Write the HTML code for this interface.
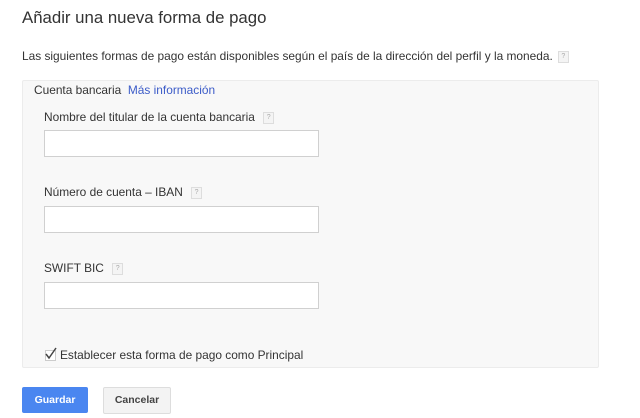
<!DOCTYPE html>
<html><head><meta charset="utf-8"><style>
body{margin:0;width:640px;height:418px;background:#fff;font-family:"Liberation Sans",Arial,sans-serif;color:#222;position:relative;overflow:hidden}
.a{position:absolute}
.h{left:22px;top:8px;font-size:16.8px;color:#333}
.t{font-size:11.9px;color:#333}
.q{display:inline-block;width:9px;height:10px;border:1px solid #ddd;background:#f4f4f4;font-size:7px;color:#aaa;text-align:center;line-height:10px;vertical-align:middle;margin-left:5px}
.panel{left:22px;top:80px;width:575px;height:286px;background:#f8f8f8;border:1px solid #ececec;border-radius:2px}
.in{left:44px;width:273px;height:25px;background:#fff;border:1px solid #d0d0d0}
.btn{top:387px;height:26px;border-radius:2px;font-size:10.5px;font-weight:bold;text-align:center;line-height:26px}
</style></head><body>
<div class="a h">Añadir una nueva forma de pago</div>
<div class="a t" style="left:22px;top:49px">Las siguientes formas de pago están disponibles según el país de la dirección del perfil y la moneda.<span class="q">?</span></div>
<div class="a panel"></div>
<div class="a t" style="left:34px;top:83px">Cuenta bancaria&nbsp; <span style="color:#3b5bc8">Más información</span></div>
<div class="a t" style="left:44px;top:110px">Nombre del titular de la cuenta bancaria <span class="q">?</span></div>
<div class="a in" style="top:130px"></div>
<div class="a t" style="left:44px;top:185px">Número de cuenta – IBAN <span class="q">?</span></div>
<div class="a in" style="top:206px"></div>
<div class="a t" style="left:44px;top:261px">SWIFT BIC <span class="q">?</span></div>
<div class="a in" style="top:282px"></div>
<div class="a" style="left:45px;top:350px;width:9px;height:9px;border:1px solid #ccc;background:#fff"></div>
<svg class="a" style="left:44px;top:346px" width="14" height="14"><path d="M2 8 L5 12 L12 2" stroke="#444" stroke-width="1.5" fill="none"/></svg>
<div class="a t" style="left:60px;top:348px">Establecer esta forma de pago como Principal</div>
<div class="a btn" style="left:22px;width:66px;background:#4a86f0;color:#fff">Guardar</div>
<div class="a btn" style="left:103px;width:66px;background:#f3f3f3;border:1px solid #ddd;color:#444;height:25px;line-height:25px">Cancelar</div>
</body></html>
